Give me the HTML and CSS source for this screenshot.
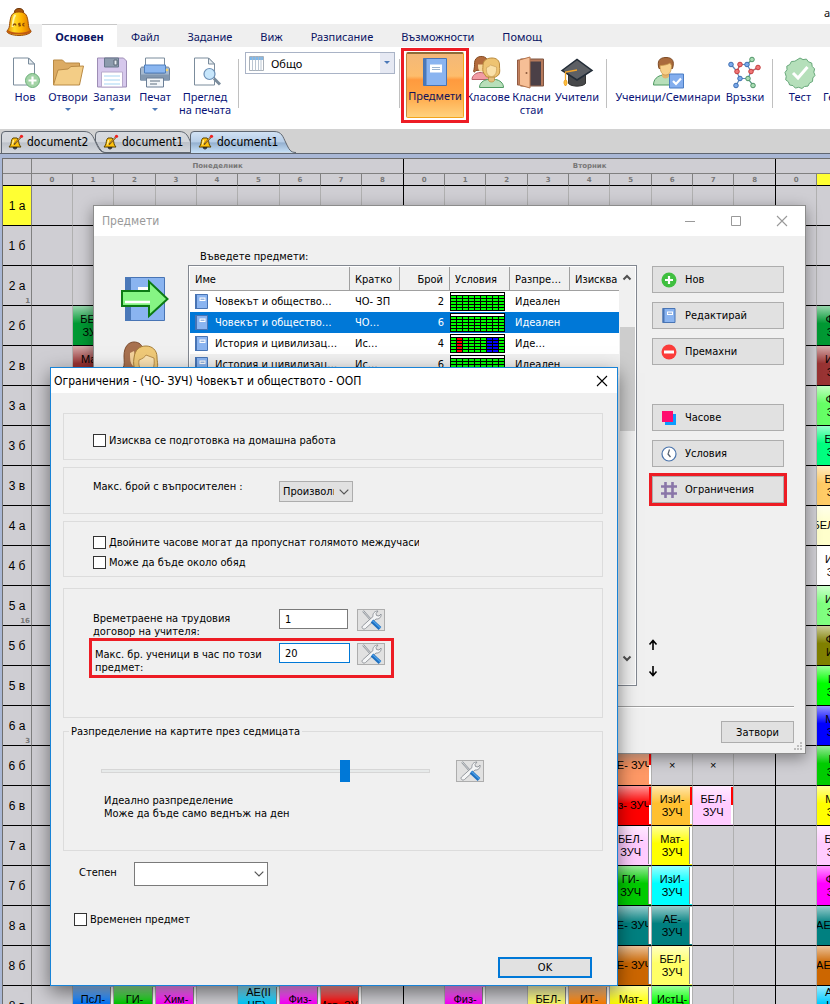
FILE: index.html
```
<!DOCTYPE html>
<html lang="bg">
<head>
<meta charset="utf-8">
<title>aSc</title>
<link rel="stylesheet" href="styles.css">
</head>
<body>
<svg class="defs" aria-hidden="true">
  <defs>
    <linearGradient id="gold" x1="0" x2="1"><stop offset="0" stop-color="#e88a00"/><stop offset=".3" stop-color="#ffdc2a"/><stop offset=".6" stop-color="#ffb400"/><stop offset="1" stop-color="#d87000"/></linearGradient>
    <linearGradient id="tabGrey" x1="0" y1="0" x2="0" y2="1"><stop offset="0" stop-color="#d8dbe0"/><stop offset=".5" stop-color="#d3d6db"/><stop offset=".52" stop-color="#bcc1c9"/><stop offset="1" stop-color="#d5d8dd"/></linearGradient>
    <linearGradient id="tabBlue" x1="0" y1="0" x2="0" y2="1"><stop offset="0" stop-color="#d3e3f5"/><stop offset=".5" stop-color="#b5cce6"/><stop offset=".52" stop-color="#93afcf"/><stop offset="1" stop-color="#c9e2f8"/></linearGradient>
    <symbol id="i-bell" viewBox="0 0 26 30">
      <path d="M13 1.500c-3 0-4.500 1.500-4.500 3.500 0 1 .3 1.800.8 2.300h7.400c.5-.5.8-1.300.8-2.300 0-2-1.500-3.500-4.500-3.500z" fill="#a8560e" stroke="#6a3206"/>
      <path d="M8 6C4.500 7.500 4 14 3.500 18.500 3.200 21.500 2 22.500 1 24c-.8 2 5 4.500 12 4.500S25.800 26 25 24c-1-1.500-2.200-2.500-2.500-5.500C22 14 21.500 7.500 18 6c-3-1.500-7-1.500-10 0z" fill="url(#gold)" stroke="#9c4e08"/>
      <path d="M1.500 24c4 3.500 19 3.500 23 0" fill="none" stroke="#c05a10" stroke-width="1.800"/>
      <path d="M6.500 20c.5-5 .5-9.500 3-12" fill="none" stroke="#fff6a8" stroke-width="1.800"/>
      <path d="M7 18.500c1-2 2.500-2 3 0M14.500 16.500c-2-.5-2.500.8-1 1.200s1 1.500-1 1.200M18.500 16.500c-2-.2-2.500 2.500 0 2.300" fill="none" stroke="#8a4a06" stroke-width="1.300"/>
    </symbol>
    <symbol id="i-minibell" viewBox="0 0 16 16">
      <path d="M5 4C3 5.500 3.500 9 2.500 11L1 13h12l-1.500-2C10.500 9 11 5.500 9 4z" fill="#ffc20e" stroke="#5a4300"/>
      <path d="M4.500 10.500l1-4.500" stroke="#fff1a0" stroke-width="1.200"/>
      <path d="M5 13.500c.5 2 3.500 2 4 0z" fill="#555" stroke="#222" stroke-width=".8"/>
      <path d="M6 10.500l6.500-7" stroke="#4d3b1a" stroke-width="1.600"/><path d="M7 9.500l5.500-6" stroke="#f3a530" stroke-width=".9"/>
      <circle cx="13.500" cy="2.300" r="1.600" fill="#ef2020"/>
    </symbol>
    <symbol id="i-new" viewBox="0 0 32 32">
      <path d="M4.500 1.500h15l6 6v21h-21z" fill="#fff" stroke="#7b8c9c"/><path d="M19.500 1.500v6h6z" fill="#e5ebf0" stroke="#7b8c9c"/>
      <circle cx="23.500" cy="24" r="7" fill="#a3d3a6" stroke="#6cb07a"/><path d="M23.500 20v8M19.500 24h8" stroke="#fff" stroke-width="2.200"/>
    </symbol>
    <symbol id="i-open" viewBox="0 0 32 32">
      <path d="M1.500 28V3.500h9l3 3h14V28z" fill="#dcab63" stroke="#b98a45"/><path d="M1.500 28.500L6 13.500l10-1 3-2.500 12.500-.5-4 19z" fill="#f3cd86" stroke="#b98a45"/>
    </symbol>
    <symbol id="i-save" viewBox="0 0 32 32">
      <path d="M1.500 1.500h26l3 3v26h-29z" fill="#d6c8ec" stroke="#9d8db5"/><path d="M8.500 1.500h14v9h-14z" fill="#8d9bad" stroke="#68778b"/><path d="M18 3.500h3v5h-3z" fill="#e8edf2" stroke="#5b6676"/>
      <path d="M5.500 15.500h21v15h-21z" fill="#fff" stroke="#b7a9cc"/><path d="M8 19.500h16M8 23.500h16M8 27.500h16" stroke="#c3e3f8" stroke-width="1.300"/>
    </symbol>
    <symbol id="i-print" viewBox="0 0 32 32">
      <path d="M6.500 14V1.500h19V14z" fill="#fff" stroke="#7b8c9c"/>
      <path d="M3.500 10.500h3v6h19v-6h3c1.500 0 2 1 2 2v11h-29v-11c0-1 .5-2 2-2z" fill="#a6b9cf" stroke="#6a7e96"/><path d="M1.500 18h29v6h-29z" fill="#8398b0"/>
      <path d="M5.500 8.500h21v8h-21z" fill="#8ab6f0" stroke="#4f7fbd"/>
      <path d="M7.500 21.500h17v9h-17z" fill="#f3f6f9" stroke="#6a7e96"/><path d="M11 24.500h10M11 27.500h7" stroke="#5c6c7e" stroke-width="1.200"/><circle cx="28" cy="13.500" r="1.300" fill="#f8d56a"/>
    </symbol>
    <symbol id="i-preview" viewBox="0 0 32 32">
      <path d="M5.500 1.500h14l6 6v21h-20z" fill="#fff" stroke="#7b8c9c"/><path d="M19.500 1.500v6h6z" fill="#e5ebf0" stroke="#7b8c9c"/>
      <path d="M25 22l6 6" stroke="#7b8c9c" stroke-width="3"/><circle cx="20.500" cy="17.500" r="5.500" fill="#c7e6fb" stroke="#6c8fb5" stroke-width="1.200"/>
    </symbol>
    <symbol id="i-grid" viewBox="0 0 15 15"><path d="M.5.500h14v14H.500z" fill="#fff" stroke="#a9b0b8"/><path d="M1 1h13v3H1z" fill="#7fb8ea"/><path d="M3.500 0v15M6.500 0v15M9.500 0v15M12 0v15" stroke="#a9b8c6" stroke-width=".8"/></symbol>
    <symbol id="i-book" viewBox="0 0 26 32">
      <path d="M1.500 2.500h23v27h-23z" fill="#8ab4f0" stroke="#4874b4"/><path d="M1.500 2.500h3v27h-3z" fill="#4a78b8"/><path d="M8 8.500h12v8H8z" fill="#fff"/><path d="M10 11.500h8M10 13.500h8" stroke="#9bb3cf"/>
    </symbol>
    <symbol id="i-smallbook" viewBox="0 0 13 15"><path d="M.5.500h12v14H.500z" fill="#8ab4f0" stroke="#4874b4"/><path d="M0 0h2v15H0z" fill="#4874b4"/><path d="M4.500 3.500h6v3.500h-6z" fill="#fff"/><path d="M5.500 5.200h4" stroke="#6b93cf"/></symbol>
    <symbol id="i-people" viewBox="0 0 34 34">
      <path d="M1 24c0-4 4-7 8-7 5 0 9 3 9 7z" fill="#f29ca4" stroke="#b7606a"/>
      <path d="M5 15c-2 3-3 1-2-1 1-4 0-6 1-9 1.500-5 10-5.500 12-1v10z" fill="#b26a3c" stroke="#84491f"/>
      <path d="M7 9h6v7H9c-2-2-2-4-2-7z" fill="#f7d79b"/>
      <path d="M8.500 32c0-4.500 4-7.500 8-8h8c4 .5 8 3.500 8 8z" fill="#b8dfba" stroke="#4f9a62"/>
      <path d="M17.500 20h6v5c-1.500 2-4.500 2-6 0z" fill="#e5c07c" stroke="#b98a3c" stroke-width=".7"/>
      <path d="M13 18c-2-3-1-5-1-8 0-6 5-7.500 9-7.500s8 2 7.500 8c0 4 1 6-1 9l-3 2h-9z" fill="#eec372" stroke="#b98a3c"/>
      <path d="M15.500 12c2-.5 3-1.500 4-2.500l6 2c.5 5-1 9.500-5 9.500s-5.500-4-5-9z" fill="#fae0a8" stroke="#caa05c" stroke-width=".7"/>
    </symbol>
    <symbol id="i-heads" viewBox="0 0 38 34">
      <path d="M2 27c2-3 1-8 1-12C3 5 8 1 13 1s9 3 9 9l-3 17z" fill="#a8714f" stroke="#7c4c2e"/>
      <path d="M9 12l4-2 3 16-4-1c-3-3-3-8-3-13z" fill="#f3d29c"/>
      <path d="M14 30c-1-4-2-8-1-13C14 8 19 5 25 5s11 4 11 11c0 6 2 8-1 13l-4 3H17z" fill="#efc977" stroke="#a67f38"/>
      <path d="M18 19c3-1 6-3 7-5l8 3c1 8-1 15-7 15s-9-6-8-13z" fill="#fae3b4" stroke="#b98f4c"/>
    </symbol>
    <symbol id="i-door" viewBox="0 0 32 34">
      <path d="M4.500 3.500h23v27h-23z" fill="#b67a5c" stroke="#7e5440"/><path d="M12 6h13v24H12z" fill="#4b4047"/>
      <path d="M1.500 4.500h4v25h-4z" fill="#c28162" stroke="#905a42"/><path d="M3.500 4.500L14 1.500v31L3.500 29.500z" fill="#f6bf96" stroke="#b5744c"/><circle cx="10.500" cy="17.500" r="1" fill="#8b5a3b"/>
    </symbol>
    <symbol id="i-cap" viewBox="0 0 34 32">
      <path d="M8.500 14v13c3 3.500 14 3.500 17 0V14z" fill="#47484a" stroke="#333"/><path d="M2 14L17 3l15 11-15 9.500z" fill="#5d6065" stroke="#232d38" stroke-width="1.500"/>
      <path d="M17 13.500L5.500 15.500V25" fill="none" stroke="#f3a62c" stroke-width="1.300"/><path d="M5.500 23c-2 2-2 4 0 6.500 2-2.500 2-4.500 0-6.500z" fill="#ffc13d" stroke="#eda01d"/>
    </symbol>
    <symbol id="i-student" viewBox="0 0 34 34">
      <path d="M2.500 29.500c0-6 4-9 9-10h6c5 1 8 4 8 10z" fill="#b8dfba" stroke="#4f9a62"/><path d="M11 18h7v3c-1.500 2.500-5.500 2.500-7 0z" fill="#e3b36c"/>
      <path d="M8 13c-2-7 0-11 7-11s8.500 4 6.500 11z" fill="#aa6b3c" stroke="#7d4a24"/><path d="M9 10c4 0 8-1 10-2.500l1.500 2.500c0 6-2 9.500-5.800 9.500S9 16 9 10z" fill="#f7d08a" stroke="#c39046" stroke-width=".7"/>
      <path d="M18.500 18.500h14v14h-14z" fill="#84aeee" stroke="#4b7dc4"/><path d="M22 25.500l3 3 5-5.500" fill="none" stroke="#fff" stroke-width="2.200"/>
    </symbol>
    <symbol id="i-links" viewBox="0 0 34 34">
      <path d="M3 9l6 7M9 16l3-7M12 9h7l5-5M19 9l4 7 7-4M23 16l-3 7M20 23h-8L9 17M12 23l-4 7M20 23l5 7" fill="none" stroke="#5b88b8" stroke-width="1.200"/>
      <path d="M9 16l3-7M23 16l7-4" stroke="#cf5a5a" stroke-width="1.200"/><path d="M19 9l5-5M20 23l5 7" stroke="#68a882" stroke-width="1.200"/>
      <g fill="#79a9ea" stroke="#3e6db0"><circle cx="3" cy="9" r="2.300"/><circle cx="19" cy="9" r="2.300"/><circle cx="12" cy="23" r="2.300"/><circle cx="8" cy="30" r="2.300"/></g>
      <g fill="#ef7575" stroke="#c43d3d"><circle cx="12" cy="9" r="2.300"/><circle cx="9" cy="16" r="2.300"/><circle cx="23" cy="16" r="2.300"/><circle cx="30" cy="12" r="2.300"/></g>
      <g fill="#a9dcb3" stroke="#4f9468"><circle cx="24" cy="4" r="2.300"/><circle cx="20" cy="23" r="2.300"/><circle cx="25" cy="30" r="2.300"/></g>
    </symbol>
    <symbol id="i-test" viewBox="0 0 32 32">
      <path d="M16 1.500l3 1.600 3.400-.5 2 2.700 3.300 1.200.5 3.400 2.400 2.500-.8 3.300 1.200 3.200-2.200 2.600-.3 3.500-3 1.600-1.500 3-3.500.4-2.600 2-3.200-1.200-3.400.8-2.300-2.500-3.400-.6-1.200-3.200-2.700-2 .5-3.400L1 16l2-2.800-.2-3.500 3-1.700 1.600-3 3.500-.3z" fill="#b5dfba" stroke="#67a87a"/>
      <path d="M9 16.500l5 5 9.500-11" fill="none" stroke="#fff" stroke-width="3"/>
    </symbol>
    <symbol id="i-tools" viewBox="0 0 24 20">
      <path d="M4 1l9 10" stroke="#8b9096" stroke-width="2"/><path d="M4 1l9 10" stroke="#e9ebee" stroke-width=".8"/>
      <path d="M3.500 16L14 6.500c-.5-3 1.500-5.500 5-5.500L17 3.500l.5 2 2.500.5 2-2c.7 3-2 5.500-5 5L6.500 18.500c-2 1.500-4.500-.5-3-2.500z" fill="#f4f5f6" stroke="#8b9096" stroke-width=".9"/>
      <path d="M13 11l8 7.500" stroke="#1d6fc0" stroke-width="3.800"/><path d="M13.500 10.500l8 7.500" stroke="#4ea0e8" stroke-width="1.300"/>
    </symbol>
    <symbol id="i-chevron" viewBox="0 0 10 6"><path d="M.7.700L5 5 9.300.700" fill="none" stroke="#555" stroke-width="1.200"/></symbol>
    <symbol id="i-scroll" viewBox="0 0 10 7"><path d="M1.500 1.500L5 5l3.500-3.500" fill="none" stroke="#505050" stroke-width="2"/></symbol>
    <symbol id="i-up" viewBox="0 0 10 12"><path d="M5 11V2M1.500 5.500L5 1.500l3.500 4" fill="none" stroke="#000" stroke-width="1.600"/></symbol>
    <symbol id="i-close" viewBox="0 0 12 12"><path d="M1 1l10 10M11 1L1 11" fill="none" stroke="currentColor" stroke-width="1.100"/></symbol>
  </defs>
</svg>

<header class="app-head">
  <div class="app-title">aSc Разписания</div>
  <nav class="menu">
    <svg class="logo" width="26" height="30"><use href="#i-bell"/></svg>
    <button class="menu-tab active">Основен</button>
    <button class="menu-tab">Файл</button>
    <button class="menu-tab">Задание</button>
    <button class="menu-tab">Виж</button>
    <button class="menu-tab">Разписание</button>
    <button class="menu-tab">Възможности</button>
    <button class="menu-tab">Помощ</button>
  </nav>
  <div class="ribbon">
    <button class="tool w42"><svg width="32" height="32"><use href="#i-new"/></svg>Нов</button>
    <button class="tool w44"><svg width="32" height="32"><use href="#i-open"/></svg>Отвори<i class="drop"></i></button>
    <button class="tool w44"><svg width="32" height="32"><use href="#i-save"/></svg>Запази<i class="drop"></i></button>
    <button class="tool w42"><svg width="32" height="32"><use href="#i-print"/></svg>Печат<i class="drop"></i></button>
    <button class="tool w58"><svg width="32" height="32"><use href="#i-preview"/></svg>Преглед<br>на печата</button>
    <span class="rule"></span>
    <label class="view-pick"><svg width="15" height="15"><use href="#i-grid"/></svg><select aria-label="Изглед"><option>Общо</option></select><span class="view-arrow"><i class="drop"></i></span></label>
    <span class="rule short-gap"></span>
    <div class="highlight"><button class="tool pressed"><svg width="26" height="32"><use href="#i-book"/></svg>Предмети</button></div>
    <button class="tool w38"><svg width="34" height="34"><use href="#i-people"/></svg>Класове</button>
    <button class="tool w49"><svg width="32" height="34"><use href="#i-door"/></svg>Класни<br>стаи</button>
    <button class="tool w42"><svg width="34" height="32"><use href="#i-cap"/></svg>Учители</button>
    <span class="rule wide-gap"></span>
    <button class="tool w108"><svg width="34" height="34"><use href="#i-student"/></svg>Ученици/Семинари</button>
    <button class="tool w46"><svg width="34" height="34"><use href="#i-links"/></svg>Връзки</button>
    <span class="rule"></span>
    <button class="tool w42"><svg width="32" height="32"><use href="#i-test"/></svg>Тест</button>
    <button class="tool last">Генериране</button>
  </div>
</header>

<div class="doc-tabs">
  <button class="doc-tab front"><svg class="tab-shape" width="106" height="24"><path d="M1.500 24V6Q1.500 2.500 5 2.500H84C92 2.500 93 8 96 14 99 20 100 23.500 106 23.500" fill="url(#tabGrey)" stroke="#5f6670"/></svg><svg width="16" height="16"><use href="#i-minibell"/></svg><span>document2</span></button>
  <button class="doc-tab"><svg class="tab-shape" width="106" height="24"><path d="M.5 12V6Q.500 2.500 4 2.500H84C92 2.500 93 8 96 14 99 20 100 23.500 106 23.500H9Q5 22 .5 12z" fill="url(#tabGrey)" stroke="#5f6670"/></svg><svg width="16" height="16"><use href="#i-minibell"/></svg><span>document1</span></button>
  <button class="doc-tab front"><svg class="tab-shape" width="106" height="24"><path d="M.5 24V6Q.500 2.500 4 2.500H84C92 2.500 93 8 96 14 99 20 100 23.500 106 23.500" fill="url(#tabBlue)" stroke="#5f6670"/></svg><svg width="16" height="16"><use href="#i-minibell"/></svg><span>document1</span></button>
</div>

<main class="workspace"><table class="timetable" id="timetable"></table></main>

<section class="window subjects" aria-label="Предмети">
  <div class="win-bar">
    <h1>Предмети</h1>
    <button class="win-btn" aria-label="Минимизирай"><svg width="12" height="12"><path d="M1 6.500h10" stroke="currentColor"/></svg></button>
    <button class="win-btn" aria-label="Увеличи"><svg width="12" height="12"><path d="M1.500 1.500h9v9h-9z" fill="none" stroke="currentColor"/></svg></button>
    <button class="win-btn" aria-label="Затвори прозореца"><svg width="12" height="12"><use href="#i-close"/></svg></button>
  </div>
  <div class="subjects-body">
    <div class="modes">
      <svg width="48" height="47" viewBox="0 0 48 47"><path d="M4.500 1.500h39v43h-39z" fill="#8ab4f0" stroke="#4874b4"/><path d="M4 1h6v44H4z" fill="#4a78b8"/><path d="M17 11h10v7H17z" fill="#fff"/><path d="M1 15h27V5.500L46.500 23 28 40V30H1z" fill="#86f584" stroke="#0c7a14" stroke-width="2"/><path d="M4 26h25" stroke="#fff" stroke-width="2.500"/></svg>
      <svg width="38" height="34"><use href="#i-heads"/></svg>
    </div>
    <div class="list-col">
      <div class="list-title">Въведете предмети:</div>
      <div class="list-box">
        <div class="list-view"><table class="list">
          <colgroup><col class="c-name"><col class="c-50"><col class="c-50"><col class="c-60"><col class="c-60"><col class="c-49"></colgroup>
          <thead><tr><th>Име</th><th>Кратко</th><th class="num">Брой</th><th>Условия</th><th>Разпре…</th><th>Изисква</th></tr></thead>
          <tbody id="subjects"></tbody>
        </table></div>
        <div class="scroll"><svg width="10" height="7" class="flip"><use href="#i-scroll"/></svg><div class="thumb"></div><svg width="10" height="7"><use href="#i-scroll"/></svg></div>
      </div>
    </div>
    <div class="side">
      <button class="side-btn"><svg width="16" height="16"><circle cx="8" cy="8" r="7.500" fill="#3fbf3f"/><path d="M8 4v8M4 8h8" stroke="#fff" stroke-width="2.200"/></svg>Нов</button>
      <button class="side-btn"><svg width="16" height="15"><use href="#i-smallbook"/></svg>Редактирай</button>
      <button class="side-btn"><svg width="16" height="16"><circle cx="8" cy="8" r="7.500" fill="#fb3c3a"/><path d="M3 8h10" stroke="#fff" stroke-width="3"/></svg>Премахни</button>
      <button class="side-btn second"><svg width="16" height="16"><path d="M4 4h11v11H4z" fill="#0a9bff"/><path d="M1 1h11v11H1z" fill="#ff0d6e"/></svg>Часове</button>
      <button class="side-btn"><svg width="16" height="16"><circle cx="8" cy="8" r="7" fill="#fff" stroke="#4a74ac" stroke-width="1.200"/><path d="M8.500 3.500L7 8l2.500 3" fill="none" stroke="#555f6b" stroke-width="1.200"/></svg>Условия</button>
      <button class="side-btn marked"><svg width="16" height="16"><path d="M4.500 0v16M11.500 0v16M0 4.500h16M0 11.500h16" stroke="#8a76a8" stroke-width="2.600"/></svg>Ограничения</button>
      <button class="move first" aria-label="Нагоре"><svg width="10" height="12"><use href="#i-up"/></svg></button>
      <button class="move" aria-label="Надолу"><svg width="10" height="12" class="flip"><use href="#i-up"/></svg></button>
    </div>
  </div>
  <div class="subjects-foot"><button class="plain-btn">Затвори</button></div>
  <svg class="grip" width="8" height="8"><path d="M6 0h2v2H6zM3 3h2v2H3zM6 3h2v2H6zM0 6h2v2H0zM3 6h2v2H3zM6 6h2v2H6z" fill="#bdbdbd"/></svg>
</section>

<section class="window limits" aria-label="Ограничения">
  <div class="win-bar small">
    <h2>Ограничения - (ЧО- ЗУЧ) Човекът и обществото - ООП</h2>
    <button class="win-btn dark" aria-label="Затвори прозореца"><svg width="12" height="12"><use href="#i-close"/></svg></button>
  </div>
  <form class="limits-body" onsubmit="return false">
    <div class="group single"><label class="tick"><input type="checkbox"><span>Изисква се подготовка на домашна работа</span></label></div>
    <div class="group single question"><label for="q">Макс. брой с въпросителен :</label><span class="pick grey"><select id="q"><option>Произволно</option></select><svg width="10" height="6"><use href="#i-chevron"/></svg></span></div>
    <div class="group ticks"><label class="tick narrow"><input type="checkbox"><span>Двойните часове могат да пропуснат голямото междучасие</span></label><label class="tick"><input type="checkbox"><span>Може да бъде около обяд</span></label></div>
    <div class="group numbers">
      <div class="num-row"><label for="dur">Времетраене на трудовия<br>договор на учителя:</label><input id="dur" type="text" value="1"><button type="button" class="tools" aria-label="Настройки"><svg width="24" height="20"><use href="#i-tools"/></svg></button></div>
      <div class="num-row boxed"><label for="max">Макс. бр. ученици в час по този<br>предмет:</label><input id="max" class="focus" type="text" value="20"><button type="button" class="tools" aria-label="Настройки"><svg width="24" height="20"><use href="#i-tools"/></svg></button></div>
    </div>
    <fieldset class="spread">
      <legend>Разпределение на картите през седмицата</legend>
      <div class="slide-row"><input type="range" min="0" max="100" value="75" aria-label="Разпределение"><button type="button" class="tools" aria-label="Настройки"><svg width="24" height="20"><use href="#i-tools"/></svg></button></div>
      <p>Идеално разпределение<br>Може да бъде само веднъж на ден</p>
    </fieldset>
    <div class="degree"><label for="deg">Степен</label><span class="pick"><select id="deg"><option></option></select><svg width="10" height="6"><use href="#i-chevron"/></svg></span></div>
    <label class="tick temp"><input type="checkbox"><span>Временен предмет</span></label>
    <div class="actions"><button class="ok">OK</button></div>
  </form>
</section>
<script src="script.js"></script>
</body>
</html>
```
FILE: styles.css
```
* { box-sizing: border-box; }
html, body { height: 100%; }
body {
  margin: 0;
  display: flex;
  flex-direction: column;
  overflow: hidden;
  background: #fff;
  color: #000;
  font: 11px/13px "DejaVu Sans Condensed", "Noto Sans", sans-serif;
}
button, input, select { font: inherit; color: inherit; margin: 0; border-radius: 0; }
button { padding: 0; border: 0; background: none; }
select { appearance: none; outline: 0; }
svg { flex: none; display: block; }
.defs { position: absolute; width: 0; height: 0; }
.flip { transform: rotate(180deg); }

/* application header */
.app-head { flex: none; font: 11px/13px "Noto Sans", sans-serif; color: #0a1464; }
.app-title { height: 24px; padding: 6px 0 0 824px; white-space: nowrap; overflow: hidden; color: #111; }
.menu { position: relative; display: flex; height: 23px; padding-left: 42px; background: #efefef; }
.logo { position: absolute; left: 6px; top: -17px; }
.menu-tab { padding: 2px 14px 0; }
.menu-tab.active { width: 75px; padding: 1px 0 0; font-weight: 700; background: #fff; border-top: 1px solid #c8c8c8; }
.ribbon { display: flex; height: 82px; padding-left: 4px; }
.tool { display: flex; flex-direction: column; align-items: center; flex: none; padding-top: 8px; white-space: nowrap; color: #0a1478; }
.tool svg { height: 35px; }
.w38 { width: 38px; } .w42 { width: 42px; } .w44 { width: 44px; } .w46 { width: 46px; }
.w49 { width: 49px; } .w58 { width: 58px; } .w108 { width: 108px; }
.tool.last { padding: 43px 0 0 2px; }
.drop { margin-top: 5px; border: 3px solid transparent; border-top-color: #4a78b8; border-bottom: 0; }
.rule { flex: none; width: 1px; height: 49px; margin: 12px 6px 0 4px; background: #c0c0c0; }
.rule.short-gap { margin-right: 1px; }
.rule.wide-gap { margin-left: 8px; margin-right: 7px; }
.view-pick { display: flex; align-items: center; flex: none; width: 150px; height: 22px; margin-top: 5px; padding-left: 3px; border: 1px solid #a9b3c6; }
.view-pick select { flex: 1; width: 0; padding: 0 6px 0 7px; border: 0; background: none; color: #000; }
.view-arrow { display: flex; justify-content: center; width: 14px; height: 20px; padding-top: 3px; background: #e6e9f3; }
.highlight { flex: none; display: flex; width: 68px; height: 75px; margin-top: 1px; padding: 1px 2px; border: 3px solid #ed1c24; position: relative; }
.tool.pressed {
  flex: 1; height: 66px; padding-top: 2px; color: #141458;
  border: 1px solid #f3a41b; border-top: 2px solid #8f6b38; border-left-color: #c08a40; border-radius: 2px;
  background: linear-gradient(#f3b878, #fdbd6c 35%, #ff9a3e 41%, #ffa646 65%, #ffd27e);
}
.tool.pressed svg { height: 32px; margin-bottom: 1px; }

/* document tabs */
.doc-tabs { flex: none; display: flex; height: 25px; background: #d2d2d2; border-bottom: 1px solid #5f6670; }
.doc-tab { position: relative; display: flex; align-items: center; gap: 3px; width: 95px; padding: 2px 0 0 8px; font-size: 12px; }
.doc-tab.front { z-index: 1; }
.doc-tab .tab-shape { position: absolute; left: 0; top: 0; }
.doc-tab > :not(.tab-shape) { position: relative; }

/* timetable */
.workspace { flex: 1; min-height: 0; overflow: hidden; padding: 4px 0 0 2px; background: #a9b7d5; font-family: "Liberation Sans", sans-serif; }
.timetable { width: 1146px; table-layout: fixed; border-collapse: separate; border-spacing: 0; border: solid #6e6e6e; border-width: 1px 0 0 1px; background: #cfced3; }
.timetable .c-head { width: 29px; } .timetable .c-a { width: 41px; } .timetable .c-b { width: 42px; }
.timetable th, .timetable td { padding: 0; border-right: 1px solid #b0b0b0; border-bottom: 1px solid #000; text-align: center; vertical-align: middle; }
.timetable tr.days th { height: 15px; border-color: #808080; font: 700 7px/8px "DejaVu Sans", sans-serif; color: #777; }
.timetable tr.hours th { height: 12px; border-right-color: #808080; font: 700 7px/8px "DejaVu Sans", sans-serif; color: #777; }
.timetable tr th.day-end, .timetable tr td.day-end { border-right-color: #000; }
.timetable tr.hours th.now { background: #ffff33; }
.timetable tbody tr { height: 40px; }
.timetable tbody th { position: relative; padding-top: 2px; border-right-color: #808080; font-weight: 400; font-size: 12px; }
.timetable tbody th.now { background: #ffff33; }
.timetable tbody th small { position: absolute; right: 1px; bottom: 0; font: 700 7px/7px "DejaVu Sans", sans-serif; color: #777; }
.card {
  display: flex; align-items: center; justify-content: center; position: relative; height: 39px; overflow: hidden;
  background-image: linear-gradient(rgba(255,255,255,.6), rgba(255,255,255,0) 45%);
  white-space: nowrap; text-align: center; font-size: 11px; line-height: 13px;
}
.card::after { content: ""; position: absolute; right: 0; top: 1px; bottom: 1px; width: 2px; background: #fff; border-left: 1px solid #888; }
.card.alert::after { background: linear-gradient(#f00 50%, #fff 50%); border-left: 0; }

/* windows */
.window { position: absolute; background: #f0f0f0; border: 1px solid #8c8c8c; box-shadow: 0 4px 14px rgba(0,0,0,.4); }
.win-bar { display: flex; align-items: center; height: 30px; padding-left: 8px; background: #fff; color: #999; }
.win-bar.small { height: 25px; padding-left: 3px; color: #000; }
.win-bar h1, .win-bar h2 { flex: 1; margin: 0; font-weight: 400; font-size: 12px; line-height: 14px; white-space: nowrap; }
.win-btn { display: flex; justify-content: center; width: 46px; color: #999; }
.win-btn.dark { width: 30px; color: #000; }
.plain-btn { width: 73px; height: 22px; background: #e1e1e1; border: 1px solid #adadad; }

.subjects { left: 93px; top: 205px; width: 713px; }
.subjects-body { display: grid; grid-template-columns: 94px 449px 132px; }
.modes { display: flex; flex-direction: column; gap: 18px; padding: 40px 0 0 27px; }
.list-col { display: flex; flex-direction: column; }
.list-title { padding: 14px 12px 2px; }
.list-box { flex: 1; display: flex; background: #fff; border: 1px solid #828790; padding: 1px; }
.list-view { flex: 1; min-width: 0; overflow: hidden; }
.list { width: 429px; table-layout: fixed; border-collapse: separate; border-spacing: 0; }
.c-name { width: 160px; } .c-50 { width: 50px; } .c-60 { width: 60px; } .c-49 { width: 49px; }
.list th { height: 24px; padding: 2px 0 0 5px; background: #f0f0f0; border-right: 1px solid #a0a0a0; border-bottom: 1px solid #a0a0a0; font-weight: 400; text-align: left; }
.list th:last-child { border-right: 0; }
.list th.num, .list td.num { text-align: right; padding-right: 6px; }
.list td { height: 21px; padding: 0 0 0 5px; white-space: nowrap; overflow: hidden; }
.list td.map { padding: 0; }
.list .name { display: flex; align-items: center; gap: 7px; }
.list tr.sel td { background: #0078d7; color: #fff; }
.list tr.alt td { background: #f0f0f0; }
.scroll { display: flex; flex-direction: column; align-items: center; width: 16px; padding: 7px 0 22px; background: #f0f0f0; }
.scroll .thumb { width: 15px; height: 104px; margin: 46px 0 auto; background: #cdcdcd; }
.side { display: flex; flex-direction: column; gap: 9px; padding: 30px 0 9px; margin-left: 15px; width: 132px; }
.side-btn { display: flex; align-items: center; gap: 8px; flex: none; height: 27px; padding-left: 8px; background: #e1e1e1; border: 1px solid #adadad; }
.side-btn.second { margin-top: 30px; }
.side-btn.marked { outline: 3px solid #ed1c24; }
.move { width: 10px; height: 12px; margin-left: -4px; margin-top: 5px; }
.move.first { margin-top: 127px; }
.subjects-foot { display: flex; justify-content: flex-end; margin: 20px 11px 0 0; padding: 14px 0 10px; border-top: 1px solid #a0a0a0; box-shadow: inset 0 1px #fff; }
.grip { position: absolute; right: 3px; bottom: 3px; }

.limits { left: 50px; top: 367px; width: 568px; border-color: #1883d7; box-shadow: 0 6px 18px rgba(0,0,0,.5); }
.limits-body { display: flex; flex-direction: column; gap: 7px; padding: 20px 14px 7px 12px; }
.group, .spread { margin: 0; border: 1px solid #dcdcdc; }
.group.single { display: flex; align-items: center; min-height: 47px; padding: 7px 29px 0; }
.group.ticks { display: flex; flex-direction: column; gap: 7px; padding: 14px 29px 7px; }
.group.numbers { margin-top: 4px; padding: 20px 28px 42px; }
.tick { display: flex; align-items: center; gap: 3px; height: 13px; }
.tick.narrow { width: 326px; }
.tick span { white-space: nowrap; overflow: hidden; }
.tick input { appearance: none; flex: none; width: 13px; height: 13px; background: #fff; border: 1px solid #333; }
.group.question { padding-top: 2px; }
.question label { width: 186px; padding-bottom: 10px; }
.pick { display: grid; align-items: center; background: #fff; border: 1px solid #7a7a7a; width: 134px; height: 24px; }
.pick > * { grid-area: 1 / 1; }
.pick select { width: 100%; height: 100%; padding: 0 18px 0 3px; background: none; border: 0; }
.pick svg { justify-self: end; margin-right: 3px; pointer-events: none; }
.pick.grey { width: 74px; height: 21px; background: #e1e1e1; border-color: #adadad; }
.num-row { display: grid; grid-template-columns: 186px 78px 28px; align-items: start; height: 32px; padding-left: 1px; }
.num-row label { padding-top: 3px; white-space: nowrap; }
.num-row input { width: 69px; height: 20px; padding: 0 5px; background: #fff; border: 1px solid #7a7a7a; outline: 0; }
.num-row input.focus { width: 71px; border-color: #0078d7; }
.num-row.boxed { grid-template-columns: 184px 78px 28px; width: 299px; height: 34px; padding: 2px 0 0 3px; outline: 3px solid #ed1c24; }
.num-row.boxed label { padding-top: 5px; }
.tools { display: grid; place-items: center; width: 28px; height: 22px; background: #e1e1e1; border: 1px solid #adadad; }
.spread { padding: 22px 37px 30px; }
.spread legend { margin-left: -32px; padding: 0 2px; }
.spread p { margin: 12px 0 0 3px; }
.slide-row { display: flex; align-items: center; gap: 26px; }
.slide-row input { appearance: none; width: 329px; height: 22px; background: none; }
.slide-row input::-webkit-slider-runnable-track { height: 4px; background: #e7eaea; border: 1px solid #d6d6d6; }
.slide-row input::-webkit-slider-thumb { appearance: none; width: 10px; height: 22px; margin-top: -10px; background: #0078d7; }
.degree { display: flex; align-items: center; margin: 4px 0 0 16px; }
.degree label { width: 55px; padding-bottom: 3px; }
.temp { margin: 20px 0 0 11px; }
.actions { display: flex; justify-content: flex-end; padding: 24px 11px 0; }
.ok { width: 94px; height: 21px; background: #e1e1e1; border: 2px solid #0078d7; }
```
FILE: script.js
```
const HOURS = 9;
const DAYS = ["Понеделник", "Вторник", "Сряда"];
const CLASSES = ["1 а", "1 б", "2 а", "2 б", "2 в", "3 а", "3 б", "3 в", "4 а", "4 б", "5 а", "5 б", "5 в", "6 а", "6 б", "6 в", "7 а", "7 б", "8 а", "8 б", "8 в"];
const NOTES = { "2 а": 1, "5 а": 16, "6 а": 3 };

/* class, day, hour, text, colour, alert mark */
const CARDS = [
  ["2 б", 0, 1, "БЕЛ-|ЗУЧ", "#009933"], ["2 в", 0, 1, "Мат-|ЗУЧ", "#993333"],
  ["6 б", 1, 5, "АЕ- ЗУЧ", "#ff9966", 1],
  ["6 в", 1, 5, "Из- ЗУЧ", "#ff0000", 1], ["6 в", 1, 6, "ИзИ-|ЗУЧ", "#ffc030", 1], ["6 в", 1, 7, "БЕЛ-|ЗУЧ", "#ffccff", 1],
  ["7 а", 1, 5, "БЕЛ-|ЗУЧ", "#ffccff"], ["7 а", 1, 6, "Мат-|ЗУЧ", "#ffff00"],
  ["7 б", 1, 5, "ГИ-|ЗУЧ", "#00cc00"], ["7 б", 1, 6, "ИзИ-|ЗУЧ", "#00ffff"],
  ["8 а", 1, 5, "АЕ- ЗУЧ", "#008080"], ["8 а", 1, 6, "АЕ-|ЗУЧ", "#008080"],
  ["8 б", 1, 5, "АЕ- ЗУЧ", "#cc6600"], ["8 б", 1, 6, "БЕЛ-|ЗУЧ", "#ffff66"],
  ["8 в", 0, 1, "ПсЛ-|ЗУЧ", "#0078ff"], ["8 в", 0, 2, "ГИ-|ЗУЧ", "#00cc00"], ["8 в", 0, 3, "Хим-|ЗУЧ", "#ff00ff"],
  ["8 в", 0, 5, "АЕ(II|ЧЕ)-|ЗУЧ", "#00ccff"], ["8 в", 0, 6, "Физ-|ЗУЧ", "#ff00ff"], ["8 в", 0, 7, "Мат- ЗУЧ", "#ff0000"],
  ["8 в", 1, 1, "Физ-|ЗУЧ", "#ff00ff"], ["8 в", 1, 3, "БЕЛ-|ЗУЧ", "#ffff66"], ["8 в", 1, 4, "ИТ-|ЗУЧ", "#ff8000"],
  ["8 в", 1, 5, "Мат-|ЗУЧ", "#ffff00"], ["8 в", 1, 6, "ИстЦ-|ЗУЧ", "#00ff00"],
  ["2 б", 2, 1, "Физ-|ЗУЧ", "#009933"], ["2 в", 2, 1, "ИзИ-|ЗУЧ", "#993333"], ["3 а", 2, 1, "Физ-|ЗУЧ", "#66ff66"],
  ["3 б", 2, 1, "БЕЛ-|ЗУЧ", "#00ff80"], ["3 в", 2, 1, "БЕЛ-|ЗУЧ", "#ffcc66"], ["4 а", 2, 1, "БЕЛ- ЗУЧ", "#ffffcc"],
  ["4 б", 2, 1, "ИзИ-|ЗУЧ", "#ffffff"], ["5 а", 2, 1, "ИзИ-|ЗУЧ", "#80ff80"], ["5 б", 2, 1, "Физ-|ИУЧ", "#808000"],
  ["5 в", 2, 1, "ИТ-|ЗУЧ", "#00ff00"], ["6 а", 2, 1, "Мат-|ЗУЧ", "#0000ff"], ["6 б", 2, 1, "ГИ-|ЗУЧ", "#00cc00"],
  ["6 в", 2, 1, "Мат-|ЗУЧ", "#ffff00"], ["7 а", 2, 1, "БЕЛ-|ЗУЧ", "#ffccff"], ["7 б", 2, 1, "Физ-|ЗУЧ", "#ff00ff"],
  ["8 а", 2, 1, "АЕ- ЗУЧ", "#008080"], ["8 б", 2, 1, "АЕ- ЗУЧ", "#cc6600"], ["8 в", 2, 1, "АЕ(II|ЧЕ)-|ЗУЧ", "#00ccff"]
];

function cellContent(cls, day, hour) {
  if (cls === "6 б" && day === 1 && (hour === 6 || hour === 7)) return "×";
  const card = CARDS.find(c => c[0] === cls && c[1] === day && c[2] === hour);
  if (!card) return "";
  return `<div class="card${card[5] ? " alert" : ""}" style="background-color:${card[4]}">${card[3].replaceAll("|", "<br>")}</div>`;
}

const slots = DAYS.flatMap((_, day) => Array.from({ length: HOURS }, (_, hour) => ({ day, hour, end: hour === HOURS - 1 ? "day-end" : "" })));

document.getElementById("timetable").innerHTML =
  `<colgroup><col class="c-head">${slots.map((_, i) => `<col class="${i % 3 === 2 ? "c-b" : "c-a"}">`).join("")}</colgroup>` +
  `<thead><tr class="days"><th></th>${DAYS.map(d => `<th class="day-end" colspan="${HOURS}">${d}</th>`).join("")}</tr>` +
  `<tr class="hours"><th></th>${slots.map(s => `<th class="${s.end}${s.day === 2 && s.hour === 1 ? "now" : ""}">${s.hour}</th>`).join("")}</tr></thead>` +
  `<tbody>${CLASSES.map((cls, i) => `<tr><th${i ? "" : ' class="now"'}>${cls}${NOTES[cls] ? `<small>${NOTES[cls]}</small>` : ""}</th>` +
    slots.map(s => `<td class="${s.end}">${cellContent(cls, s.day, s.hour)}</td>`).join("") + "</tr>").join("")}</tbody>`;

/* subjects: name, short, count, blocked columns, distribution, row class */
const SUBJECTS = [
  ["Човекът и общество…", "ЧО- ЗП", 2, {}, "Идеален", ""],
  ["Човекът и общество…", "ЧО…", 6, {}, "Идеален", "sel"],
  ["История и цивилизац…", "Ис…", 4, { 1: "#f00", 6: "#00f", 7: "#00f" }, "Иде…", ""],
  ["История и цивилизац…", "Ис…", 6, {}, "Идеален", "alt"]
];

function weekMap(marks) {
  let cells = "";
  for (let r = 0; r < 5; r++)
    for (let c = 0; c < 9; c++)
      cells += `<rect x="${1 + c * 6}" y="${4 + r * 3}" width="5" height="2" fill="${marks[c] || "#0f0"}"/>`;
  return `<svg width="55" height="19"><rect width="55" height="19"/><rect x="1" y="1" width="53" height="2" fill="#fff"/>${cells}</svg>`;
}

document.getElementById("subjects").innerHTML = SUBJECTS.map(([name, short, count, marks, spread, cls]) =>
  `<tr class="${cls}"><td><span class="name"><svg width="13" height="15"><use href="#i-smallbook"/></svg>${name}</span></td>` +
  `<td>${short}</td><td class="num">${count}</td><td class="map">${weekMap(marks)}</td><td>${spread}</td><td></td></tr>`).join("");
```
